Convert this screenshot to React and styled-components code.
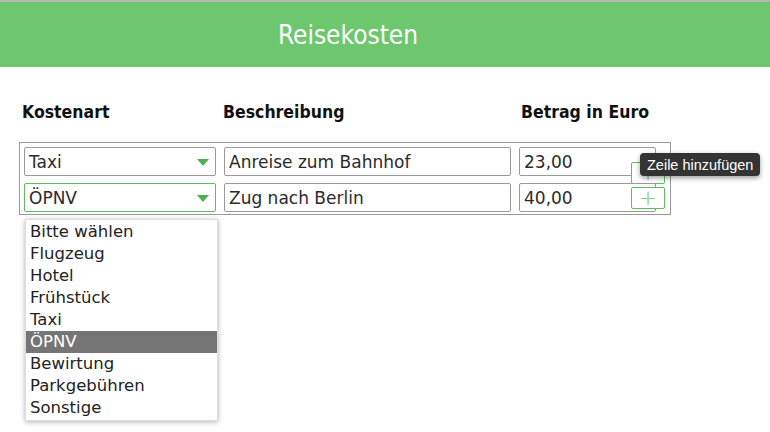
import React from "react";
import styled, { createGlobalStyle } from "styled-components";

const Global = createGlobalStyle`
  html, body { margin: 0; padding: 0; background: #fff; }
  body { font-family: "DejaVu Sans", Verdana, sans-serif; color: #333; }
`;

const Page = styled.div`
  width: 770px;
  height: 432px;
  border-top: 2px solid #b5b5b5;
  box-sizing: border-box;
  position: relative;
`;

const Header = styled.header`
  height: 65px;
  background: #6dc76f;
  display: flex;
  align-items: center;
  justify-content: center;
  padding-right: 74px;
`;

const Title = styled.h1`
  margin: 0;
  font-family: "DejaVu Sans Condensed", "DejaVu Sans", sans-serif;
  font-weight: normal;
  font-size: 26px;
  color: #fff;
`;

const Main = styled.main`
  padding: 35px 0 0 19px;
`;

const Columns = styled.div`
  display: grid;
  grid-template-columns: 192px 287px 137px;
  column-gap: 8px;
`;

const Headings = styled(Columns)`
  padding-left: 3px;
  margin-bottom: 20px;
`;

const Heading = styled.div`
  font-family: "DejaVu Sans Condensed", "DejaVu Sans", sans-serif;
  font-weight: bold;
  font-size: 17.5px;
  color: #111;
  padding-left: ${(p) => p.$shift || 0}px;
`;

const Box = styled.div`
  width: 652px;
  box-sizing: border-box;
  border: 1px solid #9a9a9a;
  padding: 4px 0 2px 4px;
  display: flex;
  flex-direction: column;
  gap: 7px;
  position: relative;
`;

const Row = styled(Columns)`
  position: relative;
`;

const Field = styled.div`
  height: 29px;
  box-sizing: border-box;
  border: 1px solid ${(p) => (p.$active ? "#5cbf5e" : "#9a9a9a")};
  border-radius: 2px;
  display: flex;
  align-items: center;
  padding-left: 4px;
  font-size: 17px;
  color: #2b2b2b;
  position: relative;
`;

const Arrow = styled.span`
  position: absolute;
  right: 6px;
  top: 11px;
  width: 0;
  height: 0;
  border-left: 6px solid transparent;
  border-right: 6px solid transparent;
  border-top: 7px solid #4caf50;
`;

const AddButton = styled.button`
  position: absolute;
  left: 607px;
  top: ${(p) => p.$top}px;
  width: 34px;
  height: 22px;
  box-sizing: border-box;
  border: 1px solid #5cbf5e;
  border-radius: 2px;
  background: #fff;
  color: #7dd07f;
  font-size: 22px;
  line-height: 18px;
  padding: 0;
  font-family: "DejaVu Sans", sans-serif;
  font-weight: 200;
`;

const Tooltip = styled.div`
  position: absolute;
  left: 640px;
  top: 151px;
  height: 23px;
  width: 120px;
  box-sizing: border-box;
  padding: 0 0 0 7px;
  background: #333;
  color: #fff;
  border-radius: 4px;
  font-family: "Liberation Sans", Arial, sans-serif;
  font-size: 14.5px;
  display: flex;
  align-items: center;
  box-shadow: 0 2px 5px rgba(0, 0, 0, 0.4);
  z-index: 3;
`;

const Menu = styled.ul`
  position: absolute;
  left: 25px;
  top: 217px;
  width: 193px;
  margin: 0;
  padding: 1px 0;
  list-style: none;
  background: #fff;
  border: 1px solid #ddd;
  box-sizing: border-box;
  box-shadow: 0 1px 5px rgba(0, 0, 0, 0.3);
  z-index: 2;
`;

const Option = styled.li`
  height: 22px;
  line-height: 22px;
  padding-left: 4px;
  font-size: 16.5px;
  color: ${(p) => (p.$selected ? "#fff" : "#222")};
  background: ${(p) => (p.$selected ? "#757575" : "transparent")};
`;

const options = [
  "Bitte wählen",
  "Flugzeug",
  "Hotel",
  "Frühstück",
  "Taxi",
  "ÖPNV",
  "Bewirtung",
  "Parkgebühren",
  "Sonstige",
];

const rows = [
  { art: "Taxi", text: "Anreise zum Bahnhof", betrag: "23,00", btnTop: 15 },
  { art: "ÖPNV", text: "Zug nach Berlin", betrag: "40,00", btnTop: 4, active: true },
];

export default function App() {
  return (
    <>
      <Global />
      <Page>
        <Header>
          <Title>Reisekosten</Title>
        </Header>
        <Main>
          <Headings>
            <Heading>Kostenart</Heading>
            <Heading $shift={1}>Beschreibung</Heading>
            <Heading $shift={4}>Betrag in Euro</Heading>
          </Headings>
          <Box>
            {rows.map((r) => (
              <Row key={r.art}>
                <Field $active={r.active}>
                  {r.art}
                  <Arrow />
                </Field>
                <Field>{r.text}</Field>
                <Field>{r.betrag}</Field>
                <AddButton $top={r.btnTop}>+</AddButton>
              </Row>
            ))}
          </Box>
        </Main>
        <Tooltip>Zeile hinzufügen</Tooltip>
        <Menu>
          {options.map((o) => (
            <Option key={o} $selected={o === "ÖPNV"}>
              {o}
            </Option>
          ))}
        </Menu>
      </Page>
    </>
  );
}
